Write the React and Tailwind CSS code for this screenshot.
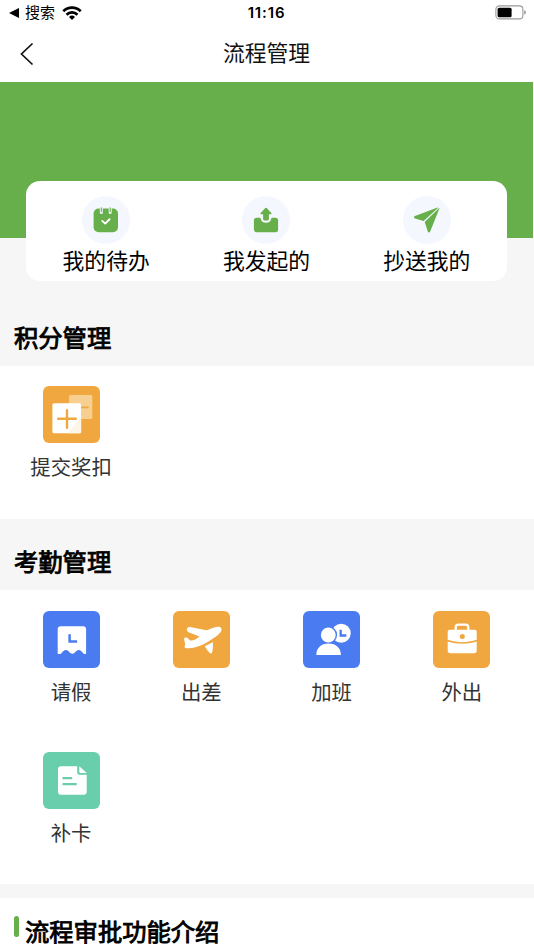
const shortcuts = [
  { label: '我的待办', icon: <TodoIcon /> },
  { label: '我发起的', icon: <StartedIcon /> },
  { label: '抄送我的', icon: <CopiedIcon /> }
];

const pointApps = [{ label: '提交奖扣', color: 'bg-[#f0a73f]', icon: <RewardIcon /> }];

const attendanceApps = [
  { label: '请假', color: 'bg-[#4a7bf0]', icon: <LeaveIcon /> },
  { label: '出差', color: 'bg-[#f0a73f]', icon: <TripIcon /> },
  { label: '加班', color: 'bg-[#4a7bf0]', icon: <OvertimeIcon /> },
  { label: '外出', color: 'bg-[#f0a73f]', icon: <OutingIcon /> },
  { label: '补卡', color: 'bg-[#68ceac]', icon: <CardIcon /> }
];

function TodoIcon() {
  return (
    <svg viewBox="0 0 48 48" className="size-12">
      <rect x="11.6" y="12.6" width="24.4" height="23.6" rx="5" fill="#67af4b" />
      <path d="M19.3 11.6v5M28.2 11.6v5" stroke="#f4f8fe" strokeWidth="3" strokeLinecap="round" />
      <path d="M19.3 11.8v4M28.2 11.8v4" stroke="#67af4b" strokeWidth="1.1" strokeLinecap="round" />
      <path d="M20.2 24.9l3 2.7 4.4-4.3" fill="none" stroke="#fff" strokeWidth="1.9" strokeLinecap="round" strokeLinejoin="round" />
    </svg>
  );
}

function StartedIcon() {
  return (
    <svg viewBox="0 0 48 48" className="size-12" fill="#67af4b">
      <path d="M14.5 21.7h3.4c.5 0 .7.3.8.8a5.4 5.4 0 0 0 10.6 0c.1-.5.3-.8.8-.8h3.4a2.6 2.6 0 0 1 2.6 2.6v9.3a2.6 2.6 0 0 1-2.6 2.6h-19a2.6 2.6 0 0 1-2.6-2.6v-9.3a2.6 2.6 0 0 1 2.6-2.6z" />
      <path d="M23.3 12.1a1 1 0 0 1 1.4 0l4.6 4.8c.5.6.2 1.3-.6 1.3h-1.8v4.9c0 .8-.5 1.3-1.3 1.3h-3.2c-.8 0-1.3-.5-1.3-1.3v-4.9h-1.8c-.8 0-1.1-.7-.6-1.3z" />
    </svg>
  );
}

function CopiedIcon() {
  return (
    <svg viewBox="0 0 48 48" className="size-12" fill="#67af4b">
      <path d="M35.2 11.7 20.6 25 12 22.5c-1.4-.5-1.4-1.9 0-2.5l22.6-8.4z" />
      <path d="M35.9 12.2c.4-.4.7-.1.5.4l-9.2 23c-.5 1.3-2 1.3-2.4 0l-3.1-9.5z" />
    </svg>
  );
}

function RewardIcon() {
  return (
    <svg viewBox="0 0 57 57" className="size-full">
      <rect x="26" y="9" width="23.3" height="24" rx="1.5" fill="#f7cf90" />
      <path d="M38 21.3h7" stroke="#f0a73f" strokeWidth="1.7" strokeLinecap="round" />
      <rect x="9.4" y="17.3" width="28.7" height="30" rx="1.5" fill="#fff" />
      <path d="M38.1 31v14.8a1.5 1.5 0 0 1-1.5 1.5H24.5z" fill="#fdf5e6" />
      <path d="M24 24.2v17.6M15.2 32.7h17.6" stroke="#f0a73f" strokeWidth="2.4" strokeLinecap="round" />
    </svg>
  );
}

function LeaveIcon() {
  return (
    <svg viewBox="0 0 57 57" className="size-full">
      <path d="M17.7 15.3h22.4a3 3 0 0 1 3 3v24.5c-1.6.7-2.9-.2-4-1.8-1.8-2.7-4.5-2.7-6.3-.4-2.3 2.9-4.6 2.9-6.9 0-1.8-2.3-4.7-2.3-6.4.4-1.1 1.7-2.6 2.5-4.8 1.8V18.3a3 3 0 0 1 3-3z" fill="#fff" />
      <path d="M26.6 23.3v7.3h7.5" fill="none" stroke="#4a7bf0" strokeWidth="2.5" />
    </svg>
  );
}

function TripIcon() {
  return (
    <svg viewBox="0 0 57 57" className="size-full" fill="#fff">
      <path d="M48.5 17.8c.6 2.8-3 6-6.3 8.3C34 32 23.5 38.2 13.2 37.2c-2.2-.3-1.5-2.3-1-4.2-.1-2-1.8-4.3-.7-6.3 1.7-1 4 .7 5.3 2.5 2.3.5 4.5.2 6-.9l3.7-2.8-11-4.2c-2-.9-2.2-3.5-.5-4.7 1-.7 2-.6 3.200-.4l14 2.9c1.4.2 2.8-.3 4.2-.9 3.600-1.700 11-4.600 12.100-.4z" />
      <path d="M31.700 35.300c2.500-1 5.600-2.600 8-4.200.5 3.800.3 7.600-.6 10.300-.5 1.300-1.700 1.300-2.600.4-2-2-3.300-4.500-4.800-6.500z" />
    </svg>
  );
}

function OvertimeIcon() {
  return (
    <svg viewBox="0 0 57 57" className="size-full">
      <circle cx="38.2" cy="22.3" r="9.5" fill="#fff" />
      <circle cx="25.3" cy="24" r="8.8" fill="#4a7bf0" />
      <circle cx="25.3" cy="24" r="7.4" fill="#fff" />
      <path d="M13.3 43.9c0-6.6 4.7-11.3 12.2-11.3s12.4 4.7 12.4 11.3z" fill="#fff" />
      <path d="M37.7 18.7v5.8h5.6" fill="none" stroke="#4a7bf0" strokeWidth="2.3" />
    </svg>
  );
}

function OutingIcon() {
  return (
    <svg viewBox="0 0 57 57" className="size-full">
      <path d="M22.7 20v-3.5a2.8 2.8 0 0 1 2.8-2.8h7a2.8 2.8 0 0 1 2.8 2.8V20" fill="none" stroke="#fff" strokeWidth="2.3" />
      <path d="M16.7 18.7h25a2 2 0 0 1 2 2v8.1c-9.6 3.2-19.4 3.2-29 0v-8.1a2 2 0 0 1 2-2z" fill="#fff" />
      <path d="M14.7 30.6c9.6 3 19.4 3 29 0v9a2.7 2.7 0 0 1-2.7 2.7H17.4a2.7 2.7 0 0 1-2.7-2.7z" fill="#fff" />
      <circle cx="29.3" cy="25.4" r="2.5" fill="#f0a73f" />
    </svg>
  );
}

function CardIcon() {
  return (
    <svg viewBox="0 0 57 57" className="size-full">
      <path d="M18 14.2h16.2v6.500a2 2 0 0 0 2 2h7.500v17a3 3 0 0 1-3 3H18a3 3 0 0 1-3-3V17.200a3 3 0 0 1 3-3z" fill="#fff" />
      <path d="M36.300 14.200l7.400 6.800h-6.400a1 1 0 0 1-1-1z" fill="#fff" />
      <path d="M19.500 26.100h9.700M19.500 32.200h14.200" stroke="#68ceac" strokeWidth="2.200" />
    </svg>
  );
}

const StatusBar = () => (
  <div className="grid h-[26px] grid-cols-3 items-center text-black">
    <div className="flex items-center pl-[9px]">
      <svg viewBox="0 0 10 10" className="h-2.5 w-2.5">
        <path d="M0 5l10-5v10z" />
      </svg>
      <span className="ml-[6px] text-[15px] leading-[26px]">搜索</span>
      <svg viewBox="0 0 20 14" className="-mt-px ml-[7px] h-3.5 w-5" fill="none" stroke="#000" strokeWidth="2.7">
        <path d="M1.3 5.2a12.400 12.400 0 0 1 17.400 0M4.500 8.700a7.900 7.900 0 0 1 11 0" />
        <path d="M10 14l-3-3a4.300 4.300 0 0 1 6 0z" fill="#000" stroke="none" />
      </svg>
    </div>
    <span className="-ml-px text-center font-[Inter] text-[15px] font-semibold tracking-[0.85px]">11:16</span>
    <svg viewBox="0 0 32 15" className="ml-auto mr-[7px] -mt-px h-[15px] w-8">
      <rect x="0.9" y="0.9" width="27" height="13" rx="3.5" fill="none" stroke="#999" strokeWidth="1.1" />
      <rect x="2.6" y="2.7" width="14" height="9.5" rx="1.5" />
      <path d="M29.3 5.2c2 .7 2 3.700 0 4.400z" fill="#888" />
    </svg>
  </div>
);

const NavBar = () => (
  <div className="grid h-14 grid-cols-3 items-center">
    <svg viewBox="0 0 14 24" className="ml-5 h-6 w-3.5" fill="none" stroke="#111" strokeWidth="1.7">
      <path d="M12.5 1.5L1.5 12l11 10.5" />
    </svg>
    <h1 className="-ml-px pt-px text-center text-[21.8px] text-[#111]">流程管理</h1>
  </div>
);

const SectionTitle = ({ children }) => (
  <h2 className="flex items-center pl-[14px] text-[24.3px] font-normal text-black [-webkit-text-stroke:0.9px_black]">
    {children}
  </h2>
);

const AppGrid = ({ apps }) => (
  <div className="mr-px grid grid-cols-4 gap-y-[43.5px] px-[6px]">
    {apps.map((app) => (
      <div key={app.label} className="flex flex-col items-center">
        <div className={`size-[57px] overflow-hidden rounded-[6px] ${app.color}`}>{app.icon}</div>
        <span className="mt-[10px] text-[20.4px] leading-[30px] text-[#333]">{app.label}</span>
      </div>
    ))}
  </div>
);

const App = () => (
  <div className="flex h-[950px] w-[534px] flex-col overflow-hidden bg-[#f6f6f6] font-['Liberation_Sans','Noto_Sans_CJK_SC',sans-serif]">
    <header className="h-[82px] shrink-0 bg-white">
      <StatusBar />
      <NavBar />
    </header>

    <div className="mr-px h-[156px] shrink-0 bg-[#67af4b]" />
    <div className="relative ml-[26px] -mt-[57px] grid h-[100px] w-[481px] shrink-0 grid-cols-3 rounded-[14px] bg-white">
      {shortcuts.map((item) => (
        <div key={item.label} className="flex flex-col items-center pt-[15px]">
          <div className="size-12 rounded-full bg-[#f4f8fe]">{item.icon}</div>
          <span className="mt-[2px] text-[21.8px] leading-[32px] text-black">{item.label}</span>
        </div>
      ))}
    </div>

    <div className="flex h-[85px] shrink-0 pt-[31px]">
      <SectionTitle>积分管理</SectionTitle>
    </div>
    <section className="h-[153px] shrink-0 bg-white pt-5">
      <AppGrid apps={pointApps} />
    </section>

    <div className="flex h-[71px] shrink-0 pt-[17px]">
      <SectionTitle>考勤管理</SectionTitle>
    </div>
    <section className="h-[294px] shrink-0 bg-white pt-[21px]">
      <AppGrid apps={attendanceApps} />
    </section>

    <section className="mt-[14px] flex flex-1 items-start bg-white pl-[14px] pt-[18px]">
      <span className="h-[21px] w-[5px] rounded-full bg-[#67af4b]" />
      <h2 className="ml-[6px] text-[24.3px] leading-[34px] font-normal text-black [-webkit-text-stroke:0.9px_black]">流程审批功能介绍</h2>
    </section>
  </div>
);

export default App;
